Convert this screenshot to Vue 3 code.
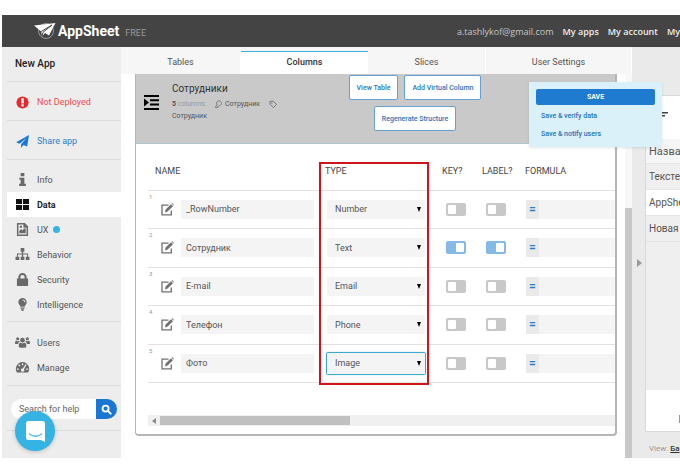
<script setup>
import { ref } from 'vue'

const mainNav = [
  { label: 'Info', icon: 'info' },
  { label: 'Data', icon: 'data', active: true },
  { label: 'UX', icon: 'ux', dot: true },
  { label: 'Behavior', icon: 'behavior' },
  { label: 'Security', icon: 'security' },
  { label: 'Intelligence', icon: 'intelligence' }
]
const adminNav = [
  { label: 'Users', icon: 'users' },
  { label: 'Manage', icon: 'manage' }
]
const icons = {
  info: '<path d="M5 0h4v3.4H5zM3.6 5H9v6.6h1.6V14H3.4v-2.4H5V7.4H3.6z"/>',
  data: '<path d="M0 1h6.5v5.5H0zM7.500 1H14v5.500H7.500zM0 7.500h6.500V13H0zM7.500 7.500H14V13H7.500z"/>',
  ux: '<path fill-rule="evenodd" d="M1 0h8.500L13 3.500V14H1zM2.600 1.600v10.800h8.800V5H8V1.600zM4 3h2.500v2H4zM3.500 11V8.500l2-2 1.500 1.600L8.600 6h1.900v5z"/>',
  behavior: '<path d="M5 0h4v4H7.700v2H13v3.500h1.500V13h-4V9.500H12V7H7.700v2.500H9V13H5V9.500h1.300V7H2v2.500h1.500V13h-4V9.500H1V6h5.300V4H5z"/>',
  security: '<path fill-rule="evenodd" d="M2.500 6V4.500a4.500 4.500 0 0 1 9 0V6H13v8H1V6zm2.200 0h4.600V4.500a2.300 2.300 0 0 0-4.600 0z"/>',
  intelligence: '<path fill-rule="evenodd" d="M7 0a4.500 4.500 0 0 1 4.500 4.500C11.500 7 9.500 7.500 9.300 9.500H4.700C4.500 7.500 2.500 7 2.500 4.500A4.500 4.500 0 0 1 7 0zm0 1.500v1c1 0 2 .8 2 2h1a3 3 0 0 0-3-3zM4.800 10.200h4.400v1.400H4.800zM5.300 12.200h3.400L7.800 14H6.200z"/>',
  users: '<circle cx="7" cy="4.500" r="2.500"/><circle cx="1.800" cy="3" r="1.700"/><circle cx="12.200" cy="3" r="1.700"/><path d="M3 12V9.500C3 8 4 7 5.200 7.200q1.800 1.400 3.600 0C10 7 11 8 11 9.500V12q-4 1.500-8 0zM-1 8.500V6.500q.5-1.500 1.500-1.400 1.300.9 2.600 0L4 6q-1.600.8-1.800 2.500zM15 8.500V6.500q-.5-1.500-1.500-1.400-1.300.9-2.600 0L10 6q1.600.8 1.800 2.500z"/>',
  manage: '<path fill-rule="evenodd" d="M7 1a7.500 7.500 0 0 1 6 11.500H1A7.500 7.500 0 0 1 7 1zM6.300 2.500v2h1.400v-2zM2.300 4.500l1.400 1.300 1-1-1.400-1.300zM1 8v1.500h2V8zM11 8v1.500h2V8zM10.500 3.300L7.300 8a1.800 1.800 0 1 0 1.300.8l2.900-4.900z"/>'
}

const tabs = ['Tables', 'Columns', 'Slices', 'User Settings']
const activeTab = ref('Columns')

const types = ['Number', 'Text', 'Email', 'Phone', 'Image']
const rows = ref([
  { name: '_RowNumber', type: 'Number', key: false, label: false, formula: '' },
  { name: 'Сотрудник', type: 'Text', key: true, label: true, formula: '' },
  { name: 'E-mail', type: 'Email', key: false, label: false, formula: '' },
  { name: 'Телефон', type: 'Phone', key: false, label: false, formula: '' },
  { name: 'Фото', type: 'Image', key: false, label: false, formula: '', focused: true }
])
const previewRows = ['Тексте', 'AppShe', 'Новая в']
</script>

<template>
  <div class="page">
    <header class="topbar">
      <a class="brand" href="#">
        <svg class="logo" viewBox="0 0 22 20">
          <circle cx="12" cy="10" r="7.500" fill="none" stroke="#8f9aa0" stroke-width="1" />
          <path fill="#fff" d="M0 4.500L21.500 2 15 14.500l-4-2.500-3 3.500-.8-5z" />
          <path fill="none" stroke="#444" stroke-width="1" d="M7.200 10.500L18 4 9 11.300 8.200 15" />
        </svg>
        <span class="brand-name">AppSheet</span>
        <span class="plan">FREE</span>
      </a>
      <nav class="account">
        <span class="email">a.tashlykof@gmail.com</span>
        <a href="#">My apps</a>
        <a href="#">My account</a>
        <a href="#">My</a>
      </nav>
    </header>

    <div class="body">
      <aside class="sidebar">
        <h1 class="app-name">New App</h1>
        <a class="status danger" href="#">
          <svg class="icon" viewBox="0 0 14 14"><circle cx="7" cy="7" r="6.500" fill="#e8262b" /><path fill="#fff" d="M5.700 2.500h2.600v5.500H5.700zM5.700 9h2.600v2.300H5.700z" /></svg>
          Not Deployed
        </a>
        <a class="status share" href="#">
          <svg class="icon" viewBox="0 0 14 14"><path fill="#1976d2" d="M14 0l-2 12.500-4-1.700L5.500 14v-4L11.500 3 4 9.300.2 7.800z" /></svg>
          Share app
        </a>
        <nav class="group main-group">
          <a v-for="item in mainNav" :key="item.label" href="#" class="nav-item" :class="{ active: item.active }">
            <svg class="icon" viewBox="0 0 14 14" v-html="icons[item.icon]"></svg>
            {{ item.label }}
            <span v-if="item.dot" class="dot"></span>
          </a>
        </nav>
        <nav class="group">
          <a v-for="item in adminNav" :key="item.label" href="#" class="nav-item">
            <svg class="icon" viewBox="0 0 14 14" v-html="icons[item.icon]"></svg>
            {{ item.label }}
          </a>
        </nav>
        <form class="search" @submit.prevent>
          <input type="text" placeholder="Search for help" aria-label="Search for help" />
          <button type="submit" aria-label="Search">
            <svg viewBox="0 0 12 12"><circle cx="5" cy="5" r="3.300" fill="none" stroke="#fff" stroke-width="2" /><path stroke="#fff" stroke-width="2.200" stroke-linecap="round" d="M7.800 7.800l2.700 2.700" /></svg>
          </button>
        </form>
        <button class="chat" type="button" aria-label="Chat">
          <svg viewBox="0 0 20 22"><path fill="#fff" d="M2.500 0h15A2.500 2.500 0 0 1 20 2.500V22l-4.500-2h-13A2.500 2.500 0 0 1 0 17.500v-15A2.500 2.500 0 0 1 2.500 0z" /><path fill="none" stroke="#35b4e4" stroke-width="1.300" stroke-linecap="round" d="M3.500 13.500q6.500 5 13 0" /></svg>
        </button>
      </aside>

      <main class="editor">
        <nav class="tabs">
          <button v-for="tab in tabs" :key="tab" type="button" class="tab" :class="{ current: tab === activeTab }" @click="activeTab = tab">{{ tab }}</button>
        </nav>
        <div class="workspace">
          <section class="card">
            <div class="card-head">
              <svg class="indent" viewBox="0 0 15 15"><path d="M0 0h15v2H0zM6 4.300h9v2H6zM6 8.600h9v2H6zM0 13h15v2H0zM0 3.500l5 4-5 4z" /></svg>
              <div class="summary">
                <h2>Сотрудники</h2>
                <p>
                  <b>5</b> <span class="muted">columns:</span>
                  <svg class="mini key" viewBox="0 0 10 10"><path fill="none" stroke="#777" stroke-width="1.200" d="M3 6.200A3 3 0 1 1 5.500 7L4.500 8H3.500v1.500H.8V8z" /></svg>
                  Сотрудник
                  <svg class="mini tag" viewBox="0 0 10 10"><path fill="none" stroke="#777" stroke-width="1.200" d="M1 1.800l.5 3.700L5.500 9.500 9.500 5.500 5.200 1.500z" /><circle cx="3.500" cy="4" r=".8" fill="#777" /></svg>
                  Сотрудник
                </p>
              </div>
              <div class="actions">
                <button type="button">View Table</button>
                <button type="button">Add Virtual Column</button>
                <button type="button">Regenerate Structure</button>
              </div>
            </div>

            <div class="table-wrap">
              <table>
                <colgroup>
                  <col class="c-index" /><col class="c-name" /><col class="c-type" /><col class="c-key" /><col class="c-label" /><col />
                </colgroup>
                <thead>
                  <tr>
                    <th id="h-name" colspan="2" class="th-name">NAME</th>
                    <th id="h-type" class="th-type">TYPE</th>
                    <th id="h-key">KEY?</th>
                    <th id="h-label">LABEL?</th>
                    <th id="h-formula">FORMULA</th>
                  </tr>
                </thead>
                <tbody>
                  <tr v-for="(row, i) in rows" :key="i">
                    <td>
                      <div class="index-cell">
                        <span class="index">{{ i + 1 }}</span>
                        <button class="edit" type="button" aria-label="Edit">
                          <svg viewBox="0 0 13 13"><path fill="none" stroke="#707070" stroke-width="1.300" d="M7.500 2.200H1v9.600h9.300V7.500" /><path fill="#707070" d="M4 9.500l.6-2.900L10 1.200l2 2-5.400 5.400zM10.600.7l.7-.7L13 1.900l-.6.7z" /></svg>
                        </button>
                      </div>
                    </td>
                    <td><input v-model="row.name" class="name-box" type="text" aria-labelledby="h-name" /></td>
                    <td>
                      <div class="select-box" :class="{ focused: row.focused }">
                        <select v-model="row.type" aria-labelledby="h-type">
                          <option v-for="t in types" :key="t">{{ t }}</option>
                        </select>
                        <svg viewBox="0 0 4 5"><path d="M0 0h4L2 5z" /></svg>
                      </div>
                    </td>
                    <td class="toggle-cell"><input v-model="row.key" class="toggle" type="checkbox" aria-labelledby="h-key" /></td>
                    <td class="toggle-cell"><input v-model="row.label" class="toggle" type="checkbox" aria-labelledby="h-label" /></td>
                    <td>
                      <div class="formula">
                        <span>=</span>
                        <input v-model="row.formula" type="text" aria-labelledby="h-formula" />
                      </div>
                    </td>
                  </tr>
                </tbody>
              </table>
              <div class="highlight"></div>
              <div class="hscroll">
                <svg viewBox="0 0 4 6"><path fill="#888" d="M4 0v6L0 3z" /></svg>
                <div class="hthumb"></div>
              </div>
            </div>
          </section>
          <div class="vscroll"><div class="vthumb"></div></div>
        </div>

        <div class="save-panel">
          <button type="button">SAVE</button>
          <a href="#">Save &amp; verify data</a>
          <a href="#">Save &amp; notify users</a>
        </div>
      </main>

      <aside class="preview">
        <div class="splitter"><svg viewBox="0 0 5 8"><path fill="#999" d="M0 0l5 4-5 4z" /></svg></div>
        <div class="device">
          <div class="screen">
            <div class="screen-bar">
              <svg viewBox="0 0 11 8"><path fill="#444" d="M0 0h11v1.500H0zM0 3h8v1.500H0zM0 6.200h5v1.500H0z" /></svg>
            </div>
            <div class="screen-title">Назва</div>
            <div v-for="item in previewRows" :key="item" class="screen-row">{{ item }}</div>
            <div class="screen-fill"></div>
            <div class="screen-foot"><svg viewBox="0 0 6 8"><path fill="none" stroke="#999" d="M.5 0v8M.5.5H6M.5 7.500H6" /></svg></div>
          </div>
          <p class="view">View: <a href="#">Ба</a></p>
        </div>
      </aside>
    </div>
  </div>
</template>

<style>
body {
  margin: 0;
  background: #fff;
}
</style>

<style scoped>
* {
  box-sizing: border-box;
}
.page {
  display: flex;
  flex-direction: column;
  min-height: 100vh;
  padding: 15px 0 18px 2px;
  overflow: hidden;
  font-family: Roboto, "Liberation Sans", sans-serif;
  font-size: 9px;
  color: #555;
}
a {
  color: inherit;
  text-decoration: none;
}
button,
input,
select {
  margin: 0;
  padding: 0;
  border: 0;
  outline: 0;
  min-width: 0;
  font: inherit;
  color: inherit;
  background: none;
}
h1,
h2,
p {
  margin: 0;
}
.topbar {
  display: flex;
  justify-content: space-between;
  align-items: center;
  height: 32px;
  padding-left: 32px;
  background: #444;
  overflow: hidden;
}
.brand {
  display: flex;
  align-items: center;
  color: #fff;
}
.logo {
  width: 22px;
  height: 20px;
}
.brand-name {
  margin-left: 2px;
  font-size: 14px;
  font-weight: 700;
}
.plan {
  margin: 3px 0 0 6px;
  font-size: 9px;
  color: #999;
}
.account {
  display: flex;
  gap: 9px;
  font-family: "Open Sans", sans-serif;
  font-size: 9px;
  font-weight: 600;
  color: #eee;
  white-space: nowrap;
}
.email {
  font-weight: 400;
  color: #c4c4c4;
}
.body {
  display: grid;
  grid-template-columns: 119px minmax(0, 1fr) 48px;
  flex: 1;
}
.sidebar {
  position: relative;
  padding-left: 5px;
  background: #ededed;
}
.app-name {
  height: 35px;
  padding-left: 8px;
  border-bottom: 1px solid #dcdcdc;
  font-size: 10px;
  font-weight: 500;
  line-height: 34px;
  color: #222;
}
.status,
.nav-item {
  display: flex;
  align-items: center;
  gap: 8px;
  padding-left: 9px;
}
.status {
  height: 39px;
  padding-top: 2px;
  border-bottom: 1px solid #dcdcdc;
}
.icon {
  width: 13px;
  height: 13px;
  overflow: visible;
  fill: #6a6a6a;
}
.danger {
  color: #ea4d50;
}
.share {
  color: #2b7fca;
}
.group {
  padding: 8px 0 5px;
  border-bottom: 1px solid #dcdcdc;
}
.main-group {
  padding: 7px 0 4px;
}
.nav-item {
  height: 25px;
}
.nav-item.active {
  background: #fff;
  font-weight: 700;
  color: #222;
}
.active .icon {
  fill: #111;
}
.dot {
  width: 7px;
  height: 7px;
  margin-left: -3px;
  border-radius: 50%;
  background: #35b4e4;
}
.search {
  display: flex;
  padding: 13px 4px 11px;
  border-bottom: 1px solid #dcdcdc;
}
.search input {
  flex: 1;
  height: 20px;
  padding-left: 8px;
  border-radius: 10px 0 0 10px;
  background: #fff;
}
.search input::placeholder {
  color: #666;
  opacity: 1;
}
.search button {
  display: grid;
  place-items: center;
  width: 21px;
  height: 20px;
  border-radius: 0 10px 10px 0;
  background: #1976d2;
}
.search button svg {
  width: 11px;
  height: 11px;
}
.chat {
  position: absolute;
  left: 13px;
  bottom: 7px;
  display: grid;
  place-items: center;
  width: 40px;
  height: 40px;
  border-radius: 50%;
  background: #35b4e4;
  box-shadow: 0 1px 4px rgba(0, 0, 0, 0.2);
}
.chat svg {
  width: 19px;
  height: 21px;
}
.editor {
  position: relative;
  display: flex;
  flex-direction: column;
}
.tabs {
  display: grid;
  grid-template-columns: 120fr 127fr 118fr 146fr;
  height: 27px;
  background: #f6f6f6;
}
.tab {
  padding-top: 3px;
  border-right: 1px solid #fff;
  font-size: 9px;
}
.tab.current {
  margin-top: 4px;
  padding: 0 0 2px;
  border-right: 0;
  background: #fff;
  box-shadow: inset 0 1px #35b4e4;
  font-weight: 500;
  color: #333;
}
.workspace {
  display: flex;
  flex: 1;
  gap: 8px;
  padding-left: 14px;
}
.card {
  flex: 1;
  min-width: 0;
  align-self: flex-start;
  border: 1px solid #b5b5b5;
  border-top: 0;
  border-right-width: 2px;
  border-bottom-width: 2px;
  border-radius: 0 0 4px 4px;
}
.card-head {
  display: flex;
  height: 70px;
  padding: 0 89px 0 8px;
  border-bottom: 1px solid #b3c6cf;
  background: #c9c9c9;
}
.indent {
  width: 15px;
  height: 15px;
  margin-top: 21px;
}
.summary {
  width: 132px;
  margin: 8px 0 0 13px;
}
.summary h2 {
  font-size: 10px;
  font-weight: 400;
  line-height: 14px;
  color: #333;
}
.summary p {
  width: 118px;
  padding-top: 2px;
  font-size: 7px;
  line-height: 12px;
}
.muted {
  color: #999;
}
.mini {
  width: 8px;
  height: 8px;
  vertical-align: -2px;
}
.key {
  margin-left: 9px;
}
.tag {
  margin-left: 7px;
}
.actions {
  display: flex;
  flex: 1;
  flex-wrap: wrap;
  justify-content: center;
  align-content: flex-start;
  gap: 6px;
  padding: 1px 20px 0;
}
.actions button {
  height: 25px;
  padding: 0 7px;
  border: 1px solid #62a0d6;
  border-radius: 2px;
  background: #fff;
  font-size: 7px;
  font-weight: 500;
  color: #2b76b9;
  white-space: nowrap;
}
.table-wrap {
  position: relative;
  padding: 0 0 8px 12px;
}
table {
  width: 100%;
  height: 239px;
  border-collapse: collapse;
  table-layout: fixed;
}
.c-index {
  width: 33px;
}
.c-name {
  width: 139px;
}
.c-type {
  width: 119px;
}
.c-key {
  width: 40px;
}
.c-label {
  width: 46px;
}
th {
  height: 46px;
  padding: 8px 0 0 3px;
  font-weight: 400;
  text-align: left;
  color: #444;
}
th#h-formula {
  padding-left: 0;
}
.th-name {
  padding-left: 7px;
}
.th-type {
  padding-left: 5px;
}
tr {
  border-bottom: 1px solid #e2e2e2;
}
td {
  padding: 0;
}
.index-cell {
  position: relative;
  padding-left: 13px;
}
.index {
  position: absolute;
  left: 1px;
  top: -10px;
  font-size: 6px;
  line-height: 8px;
  color: #999;
}
.edit,
.edit svg {
  display: block;
  width: 13px;
  height: 13px;
}
.name-box {
  display: block;
  width: 133px;
  height: 19px;
  padding-left: 5px;
  background: #f4f4f4;
}
.select-box {
  position: relative;
  display: flex;
  align-items: center;
  width: 100px;
  height: 23px;
  margin-left: 6px;
  border: 1px solid transparent;
}
.select-box select {
  width: 98px;
  height: 19px;
  padding-left: 8px;
  appearance: none;
  background: #f4f4f4;
}
.select-box svg {
  position: absolute;
  right: 4px;
  width: 4px;
  height: 5px;
  pointer-events: none;
}
.focused {
  border-color: #3ba9d0;
  border-radius: 2px;
  box-shadow: 0 0 1px #3ba9d0;
}
.focused select {
  height: 21px;
}
.toggle-cell {
  padding-left: 7px;
}
.toggle {
  display: flex;
  align-items: center;
  width: 20px;
  height: 13px;
  padding: 0 2px;
  appearance: none;
  border-radius: 2px;
  background: #c8c8c8;
}
.toggle::before {
  content: "";
  width: 8px;
  height: 9px;
  border-radius: 1px;
  background: #fff;
}
.toggle:checked {
  justify-content: flex-end;
  background: #86b9e6;
}
.formula {
  display: flex;
  height: 19px;
  margin-left: 1px;
  background: #f4f4f4;
}
.formula span {
  width: 13px;
  background: #eaeaea;
  font-size: 12px;
  font-weight: 700;
  line-height: 19px;
  text-align: center;
  color: #2b7fca;
}
.formula input {
  flex: 1;
}
.highlight {
  position: absolute;
  left: 183px;
  top: 18px;
  width: 110px;
  height: 223px;
  border: 2px solid #cf1519;
  pointer-events: none;
}
.hscroll {
  display: flex;
  align-items: center;
  gap: 4px;
  height: 11px;
  margin-top: 32px;
  padding-left: 4px;
  background: #f0f0f0;
}
.hscroll svg {
  width: 4px;
  height: 6px;
}
.hthumb {
  width: 41%;
  height: 9px;
  background: #c0c0c0;
}
.vscroll {
  width: 7px;
  padding-top: 134px;
  display: flex;
  background: #f8f8f8;
}
.vthumb {
  flex: 1;
  background: #c8c8c8;
}
.save-panel {
  position: absolute;
  top: 35px;
  right: -30px;
  z-index: 2;
  display: flex;
  flex-direction: column;
  gap: 4px;
  width: 133px;
  height: 65px;
  padding: 7px 7px 0;
  background: #daf1f9;
  box-shadow: 0 1px 3px rgba(0, 60, 80, 0.12);
  font-size: 7px;
  font-weight: 500;
  line-height: 14px;
  color: #1f72bd;
}
.save-panel button {
  height: 16px;
  border-radius: 2px;
  background: #1e7bd0;
  font-weight: 700;
  color: #fff;
}
.save-panel a {
  padding-left: 5px;
}
.preview {
  display: grid;
  grid-template-columns: 13px minmax(0, 1fr);
  background: #eaeaea;
  overflow: hidden;
}
.splitter {
  display: flex;
  align-items: center;
  padding: 20px 0 0 5px;
}
.splitter svg {
  width: 5px;
  height: 8px;
}
.device {
  display: flex;
  flex-direction: column;
  padding-top: 48px;
  white-space: nowrap;
}
.screen {
  display: flex;
  flex: 1;
  flex-direction: column;
  border: 1px solid #dadada;
  border-right: 0;
  background: #efefef;
}
.screen-bar {
  height: 43px;
  padding: 16px 0 0 11px;
  background: #fff;
}
.screen-bar svg {
  display: block;
  width: 11px;
  height: 8px;
}
.screen-title,
.screen-row {
  height: 26px;
  padding-left: 3px;
  border-bottom: 1px solid #e4e4e4;
  line-height: 25px;
  font-size: 10px;
}
.screen-title {
  height: 25px;
  font-size: 11px;
  background: #f6f6f6;
}
.screen-row:nth-child(4) {
  background: #fff;
}
.screen-fill {
  flex: 1;
}
.screen-foot {
  height: 41px;
  padding: 25px 0 0 33px;
  background: #fff;
}
.screen-foot svg {
  display: block;
  width: 6px;
  height: 8px;
}
.view {
  height: 26px;
  padding: 5px 0 0 4px;
  font-size: 8px;
  line-height: 24px;
  color: #999;
}
.view a {
  color: #333;
  font-weight: 500;
  text-decoration: underline;
}
</style>
